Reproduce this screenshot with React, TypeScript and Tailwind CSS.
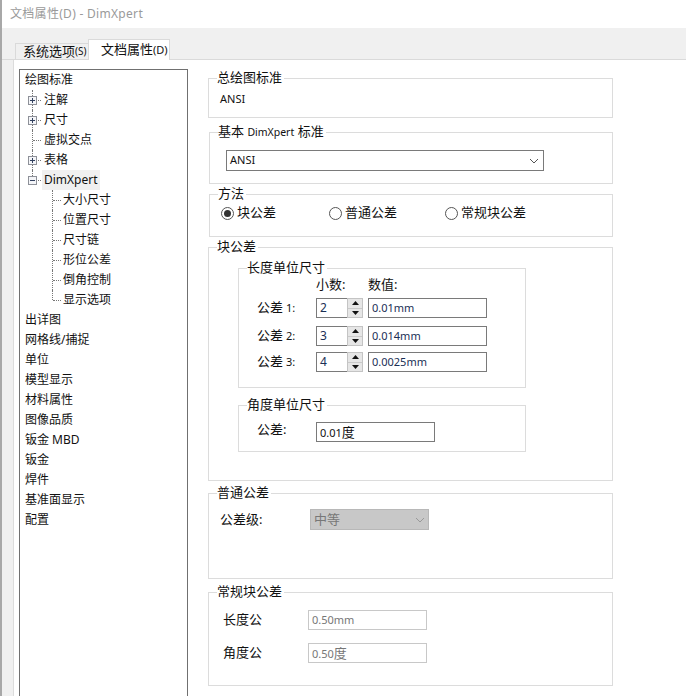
import React from "react";

const FONT = "[font-family:'Noto_Sans','Noto_Sans_CJK_SC',sans-serif]";

function Box({ open }: { open?: boolean }) {
  return (
    <span className="absolute left-[8px] top-[6px] w-[9px] h-[9px] bg-[#f4f5f8] border border-[#8d9098] flex items-center justify-center z-10">
      <svg width="7" height="7" viewBox="0 0 7 7" className="block">
        <path d="M1 3.5H6" stroke="#33415f" strokeWidth="1" />
        {!open && <path d="M3.5 1V6" stroke="#33415f" strokeWidth="1" />}
      </svg>
    </span>
  );
}

function Top({ label }: { label: string }) {
  return <div className="h-5 pl-[5px] flex items-center whitespace-nowrap">{label}</div>;
}

function L1({ label, box, open, last, highlight }: { label: string; box?: boolean; open?: boolean; last?: boolean; highlight?: boolean }) {
  return (
    <div className="h-5 flex items-center whitespace-nowrap">
      <span className="relative w-[22px] h-5 shrink-0">
        <span className={`absolute left-[12px] top-0 border-l border-dotted border-[#777] ${last ? "h-[10px]" : "h-5"}`} />
        <span className="absolute left-[13px] top-[10px] w-[8px] border-t border-dotted border-[#777]" />
        {box && <Box open={open} />}
      </span>
      <span className={`h-5 flex items-center px-[2px] ${highlight ? "bg-[#f0f0f0]" : ""}`}>{label}</span>
    </div>
  );
}

function L2({ label, last }: { label: string; last?: boolean }) {
  return (
    <div className="h-5 flex items-center whitespace-nowrap">
      <span className="relative w-[43px] h-5 shrink-0">
        <span className={`absolute left-[32px] top-0 border-l border-dotted border-[#777] ${last ? "h-[10px]" : "h-5"}`} />
        <span className="absolute left-[33px] top-[10px] w-[8px] border-t border-dotted border-[#777]" />
      </span>
      <span>{label}</span>
    </div>
  );
}

function Group({ title, className, children }: { title: React.ReactNode; className: string; children?: React.ReactNode }) {
  return (
    <div className={`relative border border-[#dcdcdc] ${className}`}>
      <span className="absolute left-[8px] top-[-10px] h-4 leading-4 text-[13px] bg-white pr-[2px] whitespace-nowrap">{title}</span>
      {children}
    </div>
  );
}

function Radio({ label, checked, className }: { label: string; checked?: boolean; className: string }) {
  return (
    <div className={`flex items-center gap-[3px] ${className}`}>
      <span className="w-[13px] h-[13px] rounded-full border border-[#555] flex items-center justify-center bg-white">
        {checked && <span className="w-[7px] h-[7px] rounded-full bg-[#333]" />}
      </span>
      <span className="text-[13px]">{label}</span>
    </div>
  );
}

function Spin({ num, digit, value, className }: { num: string; digit: string; value: string; className: string }) {
  return (
    <div className={`flex items-center h-5 ${className}`}>
      <span className="w-[59px] whitespace-nowrap text-[13px]">
        公差<span className="text-[11px]"> {num}:</span>
      </span>
      <div className="w-[47px] h-5 flex border border-[#7a7a7a] border-r-0 bg-white">
        <span className="flex-1 pl-[3px] leading-[17px] text-[#1a2f55]">{digit}</span>
        <span className="w-[16px] h-[20px] -mt-px flex flex-col bg-[#c9c9c9] border border-[#c4c4c4] gap-px">
          <span className="flex-1 flex items-center justify-center bg-[#e6e6e6]">
            <svg width="7" height="4" viewBox="0 0 7 4"><path d="M3.5 0L7 4H0Z" fill="#111" /></svg>
          </span>
          <span className="flex-1 flex items-center justify-center bg-[#e6e6e6]">
            <svg width="7" height="4" viewBox="0 0 7 4"><path d="M0 0H7L3.5 4Z" fill="#111" /></svg>
          </span>
        </span>
      </div>
      <div className="ml-[5px] w-[119px] h-5 border border-[#7a7a7a] bg-white pl-[3px] leading-[17px] text-[11px] text-[#1a2f55]">{value}</div>
    </div>
  );
}

function Chevron({ color }: { color: string }) {
  return (
    <svg width="10" height="6" viewBox="0 0 10 6" className="block">
      <path d="M1 1L5 5L9 1" fill="none" stroke={color} strokeWidth="1" />
    </svg>
  );
}

export default function App() {
  return (
    <div className={`w-[686px] h-[696px] overflow-hidden flex bg-white text-[12px] text-[#111] ${FONT}`}>
      <div className="w-[2px] bg-[#a8a8a8] shrink-0" />
      <div className="flex-1 flex flex-col min-w-0">
        <div className="h-[28px] bg-white pl-[8px] flex items-center text-[#9a9a9a] tracking-[0.3px] whitespace-nowrap">文档属性(D) - DimXpert</div>
        <div className="h-[32px] bg-[#f0f0f0] pl-[13px] flex items-end border-b border-[#dadada]">
          <div className="h-[17px] w-[74px] mb-[-1px] -mr-px bg-[#f0f0f0] border border-[#dadada] pl-[7px] flex items-center text-[13px] whitespace-nowrap">
            系统选项<span className="text-[10px]">(S)</span>
          </div>
          <div className="h-[21px] w-[82px] mb-[-1px] bg-white border border-b-0 border-[#dadada] pl-[12px] flex items-center text-[13px] whitespace-nowrap">
            文档属性<span className="text-[11px]">(D)</span>
          </div>
        </div>
        <div className="flex-1 min-h-0 flex">
          <div className="w-[12px] bg-[#f0f0f0] border-r border-[#dcdcdc] shrink-0" />
          <div className="flex-1 flex pl-[5px] pt-[9px] min-h-0">
            <div className="w-[169px] h-[640px] border-t border-x border-[#707070] shrink-0 overflow-hidden">
              <Top label="绘图标准" />
              <L1 label="注解" box />
              <L1 label="尺寸" box />
              <L1 label="虚拟交点" />
              <L1 label="表格" box />
              <L1 label="DimXpert" box open last highlight />
              <L2 label="大小尺寸" />
              <L2 label="位置尺寸" />
              <L2 label="尺寸链" />
              <L2 label="形位公差" />
              <L2 label="倒角控制" />
              <L2 label="显示选项" last />
              <Top label="出详图" />
              <Top label="网格线/捕捉" />
              <Top label="单位" />
              <Top label="模型显示" />
              <Top label="材料属性" />
              <Top label="图像品质" />
              <Top label="钣金 MBD" />
              <Top label="钣金" />
              <Top label="焊件" />
              <Top label="基准面显示" />
              <Top label="配置" />
            </div>
            <div className="ml-[20px] w-[405px] pt-[9px] flex flex-col shrink-0">
              <Group title="总绘图标准" className="h-[40px] pl-[11px] pt-[12px]">
                <div className="leading-4 text-[11px]">ANSI</div>
              </Group>
              <Group
                title={<>基本 <span className="text-[10.5px]">DimXpert</span> 标准</>}
                className="h-[52px] mt-[14px] ml-px pl-[16px] pt-[17px]"
              >
                <div className="w-[318px] h-[21px] border border-[#7a7a7a] flex items-center justify-between pl-[3px] pr-[4px] text-[11px]">
                  <span>ANSI</span>
                  <Chevron color="#555" />
                </div>
              </Group>
              <Group title="方法" className="h-[43px] mt-[10px] ml-px flex pt-[10px] pl-[11px]">
                <Radio label="块公差" checked className="w-[108px] h-4" />
                <Radio label="普通公差" className="w-[116px] h-4" />
                <Radio label="常规块公差" className="h-4" />
              </Group>
              <Group title="块公差" className="h-[234px] mt-[10px] pl-[29px] pt-[20px]">
                <Group title="长度单位尺寸" className="w-[288px] h-[120px] pl-[18px] pt-[7px]">
                  <div className="flex h-4 leading-4 pl-[59px] text-[13px]">
                    <span className="w-[52px]">小数:</span>
                    <span>数值:</span>
                  </div>
                  <Spin num="1" digit="2" value="0.01mm" className="mt-[6px]" />
                  <Spin num="2" digit="3" value="0.014mm" className="mt-[8px]" />
                  <Spin num="3" digit="4" value="0.0025mm" className="mt-[6px]" />
                </Group>
                <Group title="角度单位尺寸" className="w-[288px] h-[47px] mt-[17px] pl-[18px] pt-[16px] flex items-start">
                  <span className="w-[59px] leading-4 text-[13px] -mt-px">公差:</span>
                  <div className="w-[119px] h-5 border border-[#7a7a7a] pl-[3px] leading-[18px] text-[11px]">
                    0.01<span className="text-[13px]">度</span>
                  </div>
                </Group>
              </Group>
              <Group title="普通公差" className="h-[86px] mt-[12px] flex pl-[11px] pt-[15px]">
                <span className="w-[90px] leading-[20px] text-[13px]">公差级:</span>
                <div className="w-[119px] h-[21px] bg-[#c8c8c8] border border-[#b8b8b8] flex items-center justify-between pl-[3px] pr-[3px] text-[#777] text-[13px]">
                  <span>中等</span>
                  <Chevron color="#999" />
                </div>
              </Group>
              <Group title="常规块公差" className="h-[94px] mt-[13px] pl-[14px] pt-[17px]">
                <div className="flex items-center h-5">
                  <span className="w-[85px] text-[13px] -mt-px">长度公</span>
                  <div className="w-[119px] h-5 border border-[#c8c8c8] pl-[3px] leading-[18px] text-[11px] text-[#777]">0.50mm</div>
                </div>
                <div className="flex items-center h-5 mt-[13px]">
                  <span className="w-[85px] text-[13px]">角度公</span>
                  <div className="w-[119px] h-5 border border-[#c8c8c8] pl-[3px] leading-[18px] text-[11px] text-[#777]">
                    0.50<span className="text-[13px]">度</span>
                  </div>
                </div>
              </Group>
            </div>
          </div>
        </div>
      </div>
    </div>
  );
}
